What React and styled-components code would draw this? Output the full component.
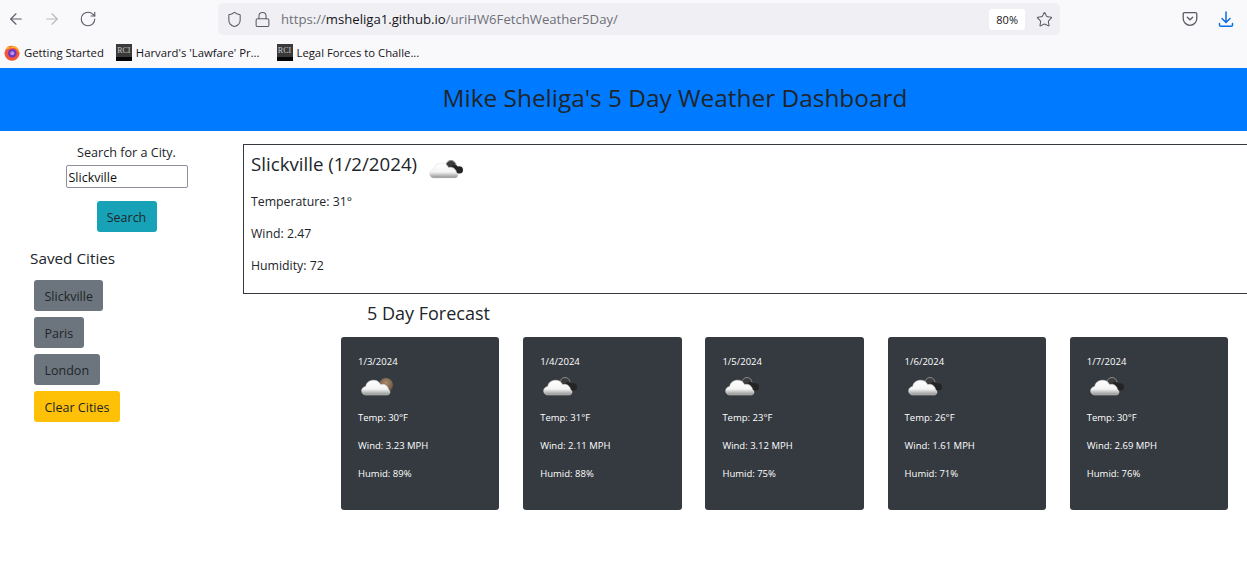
import styled, { createGlobalStyle } from "styled-components";
import { LuArrowLeft, LuArrowRight, LuRotateCw, LuLock, LuStar, LuShield } from "react-icons/lu";

const forecast = [
  { date: "1/3/2024", temp: 30, wind: "3.23", humid: 89, sun: true },
  { date: "1/4/2024", temp: 31, wind: "2.11", humid: 88 },
  { date: "1/5/2024", temp: 23, wind: "3.12", humid: 75 },
  { date: "1/6/2024", temp: 26, wind: "1.61", humid: 71 },
  { date: "1/7/2024", temp: 30, wind: "2.69", humid: 76 },
];

const cities = ["Slickville", "Paris", "London"];

function WeatherIcon({ sun, id }) {
  return (
    <svg width="36" height="28" viewBox="0 0 36 28">
      <defs>
        <linearGradient id={`cloud${id}`} x1="0" y1="0" x2="0" y2="1">
          <stop offset="0" stopColor="#ffffff" />
          <stop offset="0.6" stopColor="#f4f4f4" />
          <stop offset="1" stopColor="#8d8d8d" />
        </linearGradient>
        <radialGradient id={`sun${id}`} cx="0.5" cy="0.35" r="0.7">
          <stop offset="0" stopColor="#a98c6c" />
          <stop offset="1" stopColor="#5f4a38" />
        </radialGradient>
      </defs>
      {sun ? (
        <circle cx="26" cy="11" r="7" fill={`url(#sun${id})`} />
      ) : (
        <>
          <circle cx="23" cy="8.500" r="5" fill="#3c3c3c" stroke="#8a8a8a" strokeWidth="1" />
          <path d="M23 16.500A3.500 3.500 0 0 1 23 9.500A5 5 0 0 1 30 9.500A3.600 3.600 0 0 1 35 13A3.500 3.500 0 0 1 31.500 16.500Z" fill="#242424" />
        </>
      )}
      <path
        d="M6 21A4.200 4.200 0 0 1 5.600 12.600A8 8 0 0 1 20.600 10.600A6 6 0 0 1 28.600 15.600A2.900 2.900 0 0 1 27.500 21Z"
        fill={`url(#cloud${id})`}
        stroke="#d8d8d8"
        strokeWidth="0.500"
      />
    </svg>
  );
}

export default function App() {
  return (
    <>
      <GlobalStyle />
      <Window>
        <Toolbar>
          <NavIcon><LuArrowLeft /></NavIcon>
          <NavIcon $faded><LuArrowRight /></NavIcon>
          <NavIcon><LuRotateCw /></NavIcon>
          <UrlBar>
            <UrlIcon><LuShield /></UrlIcon>
            <UrlIcon><LuLock /></UrlIcon>
            <UrlText>
              https://<strong>msheliga1.github.io</strong>/uriHW6FetchWeather5Day/
            </UrlText>
            <Zoom>80%</Zoom>
            <UrlIcon><LuStar /></UrlIcon>
          </UrlBar>
          <ToolIcons>
            <svg width="16" height="16" viewBox="0 0 16 16" fill="none" stroke="#5b5b66" strokeWidth="1.300">
              <path d="M2.500 1.700h11c.8 0 1.300.5 1.300 1.300v4.500c0 3.800-3 6.800-6.800 6.800s-6.800-3-6.800-6.800V3c0-.8.5-1.300 1.300-1.300z" />
              <path d="M5.300 6.200 8 8.800l2.700-2.600" strokeLinecap="round" />
            </svg>
            <svg width="16" height="17" viewBox="0 0 16 17" fill="none" stroke="#0a6ee0" strokeWidth="1.500" strokeLinecap="round">
              <path d="M8 1v10M4 7.500 8 11.500l4-4" />
              <path d="M1.500 12.500v1.500c0 .8.500 1.300 1.300 1.300h10.400c.8 0 1.300-.5 1.300-1.300v-1.500" />
            </svg>
          </ToolIcons>
        </Toolbar>
        <Bookmarks>
          <Bookmark>
            <svg width="16" height="16" viewBox="0 0 16 16">
              <circle cx="8" cy="8.300" r="7.500" fill="#f2553a" />
              <path d="M1 6c1-3.500 3-5 4-5.200-.4 1 0 1.800.6 2.200C7 1.500 9 .8 11 1.200c2.800 1.200 4.500 3.800 4.500 7 0 .5 0 1-.1 1.500-.5-3.500-2.500-6-5.400-6.700C6 2.800 3 3.500 1 6z" fill="#ffb32e" />
              <circle cx="8.300" cy="8.200" r="4.300" fill="#6e37c0" />
              <circle cx="8.300" cy="8.200" r="2" fill="#b892ec" />
            </svg>
            Getting Started
          </Bookmark>
          <Bookmark $wide><Rci>RCI</Rci>Harvard's 'Lawfare' Pr...</Bookmark>
          <Bookmark><Rci>RCI</Rci>Legal Forces to Challe...</Bookmark>
        </Bookmarks>
        <Site>
          <Banner>Mike Sheliga's 5 Day Weather Dashboard</Banner>
          <Columns>
            <Sidebar>
              <SearchForm>
                <SearchLabel>Search for a City.</SearchLabel>
                <SearchInput defaultValue="Slickville" />
                <SearchButton>Search</SearchButton>
              </SearchForm>
              <SavedTitle>Saved Cities</SavedTitle>
              <SavedList>
                {cities.map((city) => (
                  <CityButton key={city}>{city}</CityButton>
                ))}
                <CityButton $clear>Clear Cities</CityButton>
              </SavedList>
            </Sidebar>
            <Main>
              <Current>
                <CurrentTitle>
                  Slickville (1/2/2024)
                  <WeatherIcon id="now" />
                </CurrentTitle>
                <CurrentLine>Temperature: 31°</CurrentLine>
                <CurrentLine>Wind: 2.47</CurrentLine>
                <CurrentLine>Humidity: 72</CurrentLine>
              </Current>
              <ForecastTitle>5 Day Forecast</ForecastTitle>
              <Cards>
                {forecast.map((day, i) => (
                  <Card key={day.date}>
                    <CardDate>{day.date}</CardDate>
                    <CardIcon><WeatherIcon sun={day.sun} id={i} /></CardIcon>
                    <CardLine>Temp: {day.temp}°F</CardLine>
                    <CardLine>Wind: {day.wind} MPH</CardLine>
                    <CardLine>Humid: {day.humid}%</CardLine>
                  </Card>
                ))}
              </Cards>
            </Main>
          </Columns>
        </Site>
      </Window>
    </>
  );
}

const GlobalStyle = createGlobalStyle`
  html, body {
    margin: 0;
    background: #fff;
    overflow: hidden;
  }
  * {
    box-sizing: border-box;
  }
  body {
    font-family: "Open Sans", "Noto Sans", "Liberation Sans", sans-serif;
    color: #212529;
  }
`;

const Window = styled.div`
  width: 1247px;
  height: 574px;
  overflow: hidden;
`;

const Toolbar = styled.div`
  height: 38px;
  background: #f9f9fb;
  display: flex;
  align-items: center;
  padding-left: 7px;
  gap: 18px;
`;

const NavIcon = styled.span`
  width: 18px;
  display: flex;
  justify-content: center;
  font-size: 18px;
  color: ${(p) => (p.$faded ? "#b8b8be" : "#5b5b66")};
  svg {
    stroke-width: 1.500;
  }
`;

const UrlBar = styled.div`
  width: 842px;
  height: 32px;
  margin-left: 103px;
  background: #f0f0f4;
  border-radius: 5px;
  display: flex;
  align-items: center;
  padding: 0 7px;
  gap: 10px;
`;

const UrlIcon = styled.span`
  width: 18px;
  display: flex;
  justify-content: center;
  font-size: 17px;
  color: #5b5b66;
  svg {
    stroke-width: 1.500;
  }
`;

const UrlText = styled.span`
  flex: 1;
  font-size: 13.150px;
  color: #6f6f78;
  strong {
    font-weight: 400;
    color: #15141a;
  }
`;

const Zoom = styled.span`
  background: #fff;
  border-radius: 3px;
  padding: 3px 7px;
  font-size: 11px;
  color: #15141a;
`;

const ToolIcons = styled.div`
  display: flex;
  align-items: center;
  gap: 20px;
  margin-left: 104px;
`;

const Bookmarks = styled.div`
  height: 30px;
  background: #f9f9fb;
  display: flex;
  align-items: center;
  padding: 0 4px 1px;
  gap: 12px;
`;

const Bookmark = styled.span`
  display: flex;
  align-items: center;
  gap: 4px;
  font-size: 11.300px;
  color: #15141a;
  margin-right: ${(p) => (p.$wide ? "5px" : "0")};
`;

const Rci = styled.span`
  width: 16px;
  height: 17px;
  background: linear-gradient(#3a3a3a 0 75%, #050505 75%);
  color: #c8c8c8;
  font-family: "Liberation Serif", serif;
  font-size: 8px;
  line-height: 13px;
  text-align: center;
`;

const Site = styled.div`
  width: 1350px;
`;

const Banner = styled.h1`
  margin: 0;
  height: 63px;
  padding-bottom: 5px;
  background: #007bff;
  display: flex;
  align-items: center;
  justify-content: center;
  font-size: 24.400px;
  font-weight: 400;
  color: #212529;
`;

const Columns = styled.div`
  display: flex;
`;

const Sidebar = styled.aside`
  width: 243px;
  flex: none;
  padding-top: 12px;
`;

const SearchForm = styled.div`
  width: 253px;
  display: flex;
  flex-direction: column;
  align-items: center;
`;

const SearchLabel = styled.label`
  font-size: 12.600px;
  line-height: 19px;
`;

const SearchInput = styled.input`
  width: 122px;
  height: 23px;
  margin-top: 3px;
  padding: 1px 2px 0;
  font: inherit;
  font-size: 12.500px;
  color: #111;
  border: 1px solid #8f8f9d;
  border-radius: 2px;
  background: #fff;
`;

const SearchButton = styled.button`
  margin-top: 13px;
  width: 60px;
  height: 31px;
  padding: 2px 0 0;
  border: 0;
  border-radius: 3px;
  background: #17a2b8;
  color: #212529;
  font: inherit;
  font-size: 12.500px;
`;

const SavedTitle = styled.h4`
  margin: 15px 0 0 30px;
  font-size: 15.300px;
  line-height: 22px;
  font-weight: 400;
`;

const SavedList = styled.div`
  margin: 11px 0 0 34px;
  display: flex;
  flex-direction: column;
  align-items: flex-start;
  gap: 6px;
`;

const CityButton = styled.button`
  height: 31px;
  padding: 2px 10.500px 0;
  border: 0;
  border-radius: 3px;
  background: ${(p) => (p.$clear ? "#ffc107" : "#6c757d")};
  color: #212529;
  font: inherit;
  font-size: 12.500px;
`;

const Main = styled.main`
  flex: 1;
  padding-top: 13px;
  min-width: 0;
`;

const Current = styled.section`
  height: 150px;
  border: 1px solid #343a40;
  padding: 4px 7px;
`;

const CurrentTitle = styled.h3`
  margin: 0 0 17px;
  height: 27px;
  display: flex;
  align-items: flex-start;
  gap: 11px;
  font-size: 18.700px;
  line-height: 29px;
  font-weight: 400;
  svg {
    margin-top: 8px;
  }
`;

const CurrentLine = styled.p`
  margin: 0 0 15px;
  font-size: 12.300px;
  line-height: 17px;
`;

const ForecastTitle = styled.h4`
  margin: 7px 0 0 124px;
  font-size: 18px;
  line-height: 25px;
  font-weight: 400;
`;

const Cards = styled.div`
  margin: 11px 0 0 98px;
  width: 887.200px;
  display: flex;
  justify-content: space-between;
`;

const Card = styled.article`
  width: 158.400px;
  height: 173px;
  background: #343a40;
  border-radius: 3px;
  color: #fff;
  padding: 17px;
`;

const CardDate = styled.div`
  font-size: 9.500px;
  line-height: 15px;
`;

const CardIcon = styled.div`
  height: 36px;
  padding: 5px 0 0 2px;
  margin-bottom: 6px;
`;

const CardLine = styled.p`
  margin: 0 0 14px;
  font-size: 9.500px;
  line-height: 14px;
`;
